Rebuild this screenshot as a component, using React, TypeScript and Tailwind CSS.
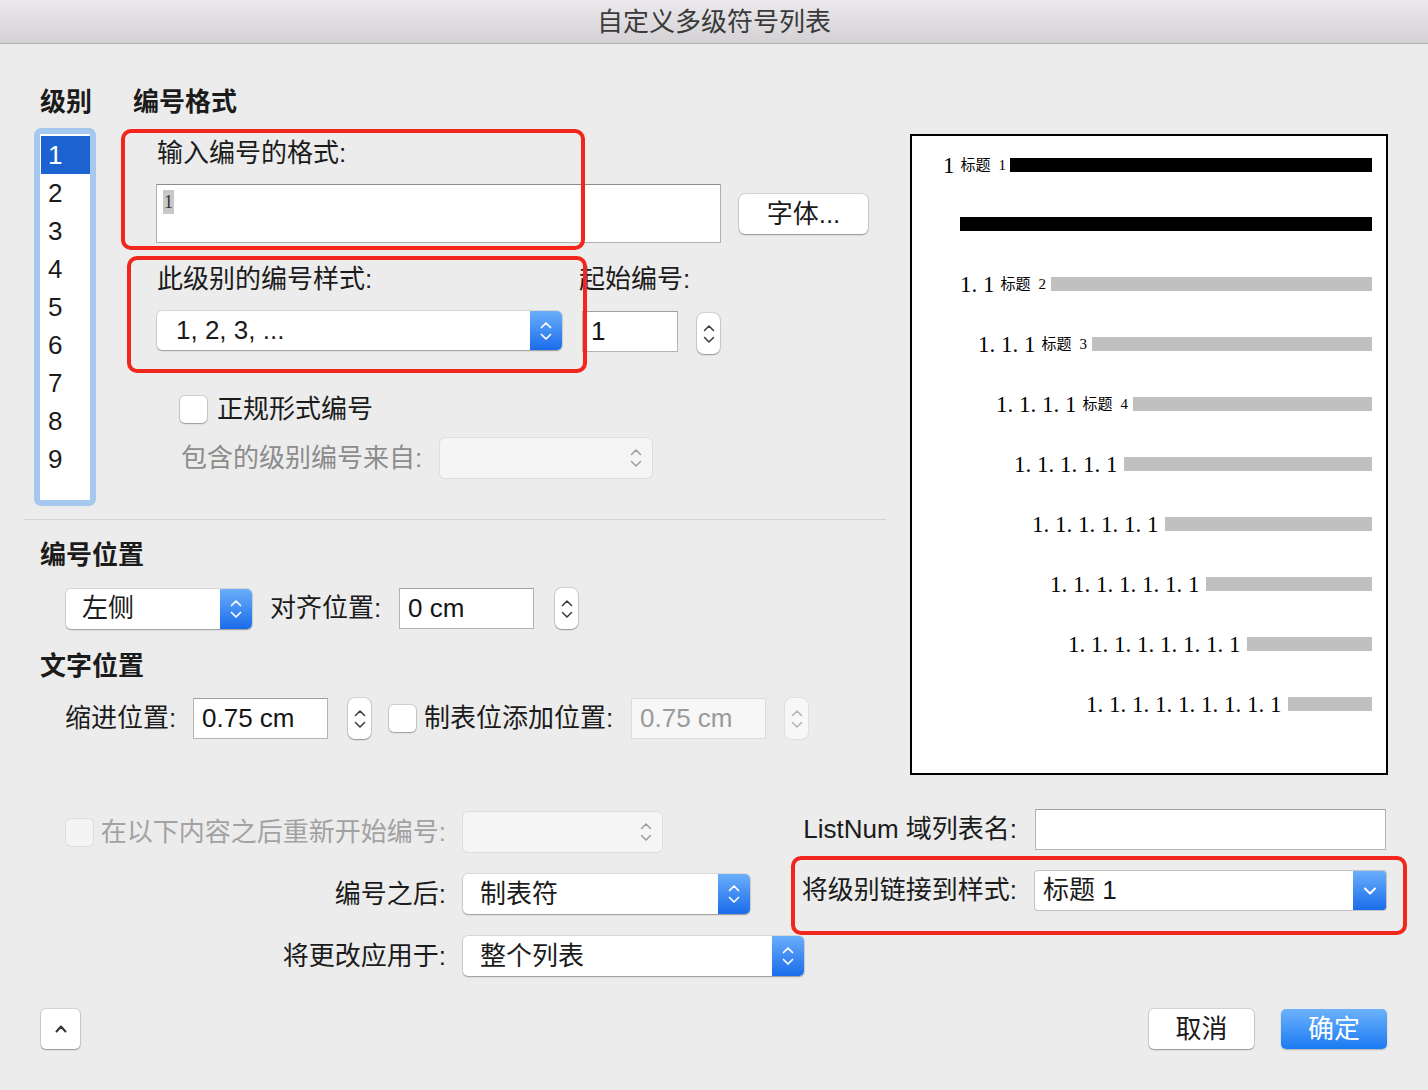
import React from "react";

function Chevs({ color, sw = 1.7 }: { color: string; sw?: number }) {
  return (
    <svg width="14" height="26" viewBox="0 0 14 26" fill="none">
      <path d="M2.5 9.5 L7 5 L11.5 9.5" stroke={color} strokeWidth={sw} strokeLinecap="round" strokeLinejoin="round" />
      <path d="M2.5 16.5 L7 21 L11.5 16.5" stroke={color} strokeWidth={sw} strokeLinecap="round" strokeLinejoin="round" />
    </svg>
  );
}

function DownChev() {
  return (
    <svg width="14" height="10" viewBox="0 0 14 10" fill="none">
      <path d="M2 2.5 L7 7.5 L12 2.5" stroke="white" strokeWidth="2" strokeLinecap="round" strokeLinejoin="round" />
    </svg>
  );
}

function Select({ cls, text, kind, pl = "pl-[18px]" }: { cls: string; text?: string; kind: "blue" | "down" | "disabled"; pl?: string }) {
  const base =
    kind === "disabled"
      ? "bg-[#f5f5f5] shadow-[0_0_0_1px_#dedede,0_1px_1px_rgba(0,0,0,0.06)]"
      : kind === "down"
      ? "bg-white shadow-[0_0_0_1px_#c4c4c4]"
      : "bg-white shadow-[0_0_0_1px_rgba(0,0,0,0.08),0_1px_1.5px_rgba(0,0,0,0.3)]";
  return (
    <div className={`shrink-0 flex ${kind === "down" ? "rounded-[3px]" : "rounded-[5px]"} ${base} ${cls}`}>
      <div className={`flex-1 flex items-center ${pl} text-[26px] text-[#1b1b1b]`}>{text}</div>
      {kind === "blue" && (
        <div className="w-[32px] rounded-r-[5px] bg-[linear-gradient(to_bottom,#6aaefb,#1a6cea)] flex items-center justify-center">
          <Chevs color="white" />
        </div>
      )}
      {kind === "down" && (
        <div className="w-[33px] rounded-r-[3px] bg-[linear-gradient(to_bottom,#6aaefb,#1a6cea)] flex items-center justify-center">
          <DownChev />
        </div>
      )}
      {kind === "disabled" && (
        <div className="w-[32px] flex items-center justify-center">
          <Chevs color="#9c9c9c" sw={1.5} />
        </div>
      )}
    </div>
  );
}

function Stepper({ disabled = false }: { disabled?: boolean }) {
  return (
    <div
      className={`shrink-0 w-[23px] h-[41px] rounded-[7px] flex items-center justify-center ${
        disabled ? "bg-[#f7f7f7] shadow-[0_0_0_1px_#e0e0e0]" : "bg-white shadow-[0_0_0_1px_rgba(0,0,0,0.1),0_1px_1.5px_rgba(0,0,0,0.3)]"
      }`}
    >
      <Chevs color={disabled ? "#b4b4b4" : "#3a3a3a"} sw={1.5} />
    </div>
  );
}

function Checkbox({ disabled = false }: { disabled?: boolean }) {
  return (
    <div
      className={`shrink-0 w-[27px] h-[27px] rounded-[5px] ${
        disabled ? "bg-[#f4f4f4] shadow-[0_0_0_1px_#dedede]" : "bg-white shadow-[0_0_0_1px_rgba(0,0,0,0.12),0_1px_1.5px_rgba(0,0,0,0.25)]"
      }`}
    />
  );
}

function TextInput({ cls, text, disabled = false }: { cls: string; text?: string; disabled?: boolean }) {
  return (
    <div
      className={`shrink-0 flex items-center pl-[8px] text-[26px] ${
        disabled ? "bg-[#f7f7f7] border border-[#dcdcdc] text-[#9a9a9a]" : "bg-white border border-[#b4b4b4] border-t-[#a0a0a0] text-[#151515]"
      } ${cls}`}
    >
      {text}
    </div>
  );
}

function Preview() {
  return (
    <div className="shrink-0 ml-[24px] mt-[90px] w-[478px] h-[641px] border-2 border-black bg-white font-['Liberation_Serif','Noto_Sans_CJK_SC',serif] text-black">
      <div className="flex items-center h-[58px] pl-[31px] pr-[14px]">
        <span className="text-[23px] leading-none">1</span>
        <span className="ml-[6px] text-[15px] leading-none">标题</span>
        <span className="ml-[8px] text-[15px] leading-none">1</span>
        <div className="ml-[4px] flex-1 h-[14px] bg-black" />
      </div>
      <div className="flex items-center h-[60px] pl-[48px] pr-[14px]">
        <div className="flex-1 h-[14px] bg-black" />
      </div>
      <div className="flex items-center h-[60px] pl-[48px] pr-[14px]">
        <span className="text-[23px] leading-none whitespace-pre">1. 1</span>
        <span className="ml-[6px] text-[15px] leading-none">标题</span>
        <span className="ml-[8px] text-[15px] leading-none">2</span>
        <div className="ml-[5px] flex-1 h-[14px] bg-[#c0c0c0]" />
      </div>
      <div className="flex items-center h-[60px] pl-[66px] pr-[14px]">
        <span className="text-[23px] leading-none whitespace-pre">1. 1. 1</span>
        <span className="ml-[6px] text-[15px] leading-none">标题</span>
        <span className="ml-[8px] text-[15px] leading-none">3</span>
        <div className="ml-[5px] flex-1 h-[14px] bg-[#c0c0c0]" />
      </div>
      <div className="flex items-center h-[60px] pl-[84px] pr-[14px]">
        <span className="text-[23px] leading-none whitespace-pre">1. 1. 1. 1</span>
        <span className="ml-[6px] text-[15px] leading-none">标题</span>
        <span className="ml-[8px] text-[15px] leading-none">4</span>
        <div className="ml-[5px] flex-1 h-[14px] bg-[#c0c0c0]" />
      </div>
      <div className="flex items-center h-[60px] pl-[102px] pr-[14px]">
        <span className="text-[23px] leading-none whitespace-pre">1. 1. 1. 1. 1</span>
        <div className="ml-[6px] flex-1 h-[14px] bg-[#c0c0c0]" />
      </div>
      <div className="flex items-center h-[60px] pl-[120px] pr-[14px]">
        <span className="text-[23px] leading-none whitespace-pre">1. 1. 1. 1. 1. 1</span>
        <div className="ml-[6px] flex-1 h-[14px] bg-[#c0c0c0]" />
      </div>
      <div className="flex items-center h-[60px] pl-[138px] pr-[14px]">
        <span className="text-[23px] leading-none whitespace-pre">1. 1. 1. 1. 1. 1. 1</span>
        <div className="ml-[6px] flex-1 h-[14px] bg-[#c0c0c0]" />
      </div>
      <div className="flex items-center h-[60px] pl-[156px] pr-[14px]">
        <span className="text-[23px] leading-none whitespace-pre">1. 1. 1. 1. 1. 1. 1. 1</span>
        <div className="ml-[6px] flex-1 h-[14px] bg-[#c0c0c0]" />
      </div>
      <div className="flex items-center h-[60px] pl-[174px] pr-[14px]">
        <span className="text-[23px] leading-none whitespace-pre">1. 1. 1. 1. 1. 1. 1. 1. 1</span>
        <div className="ml-[6px] flex-1 h-[14px] bg-[#c0c0c0]" />
      </div>
    </div>
  );
}

export default function App() {
  const levels = ["1", "2", "3", "4", "5", "6", "7", "8", "9"];
  return (
    <div className="relative w-[1428px] h-[1090px] overflow-hidden whitespace-nowrap bg-[#ececec] font-['Liberation_Sans','Noto_Sans_CJK_SC',sans-serif] text-[#1b1b1b]">
      {/* Title bar */}
      <div className="h-[44px] bg-[linear-gradient(to_bottom,#ebe9eb,#d3d1d3)] border-b border-[#b3b3b3] flex items-center justify-center">
        <span className="text-[26px] leading-none text-[#3a3a3a]">自定义多级符号列表</span>
      </div>

      <div className="flex pl-[24px]">
        {/* left column */}
        <div className="shrink-0 w-[862px]">
          <div className="flex pt-[43px]">
            {/* levels */}
            <div className="shrink-0 ml-[10px] w-[62px]">
              <div className="pl-[6px] h-[30px] leading-[30px] text-[26px] font-bold">级别</div>
              <div className="mt-[11px] h-[378px] rounded-[7px] border-[6px] border-[#a6c8ee] bg-white pt-[2px] pl-px">
                {levels.map((l, i) => (
                  <div
                    key={l}
                    className={`h-[38px] leading-[38px] pl-[7px] text-[26px] ${i === 0 ? "bg-[#1c63d1] text-white" : "text-[#1b1b1b]"}`}
                  >
                    {l}
                  </div>
                ))}
              </div>
            </div>
            {/* format */}
            <div className="ml-[37px] flex-1">
              <div className="h-[30px] leading-[30px] text-[26px] font-bold">编号格式</div>
              <div className="pl-[24px]">
                <div className="mt-[21px] h-[30px] leading-[30px] text-[26px]">输入编号的格式:</div>
                <div className="mt-[16px] flex">
                  <div className="shrink-0 -ml-px w-[565px] h-[59px] bg-white border border-[#b0b0b0] border-t-[#8e8e8e] pl-[6px] pt-[5px]">
                    <span className="inline-block bg-[#c8c8c8] font-['Liberation_Serif',serif] text-[18px] leading-[24px] text-[#333] px-px">1</span>
                  </div>
                  <div className="shrink-0 ml-[18px] mt-[10px] w-[129px] h-[40px] rounded-[6px] bg-white shadow-[0_0_0_1px_rgba(0,0,0,0.1),0_1px_1.5px_rgba(0,0,0,0.3)] flex items-center justify-center text-[26px]">
                    字体...
                  </div>
                </div>
                <div className="mt-[21px] flex h-[30px] leading-[30px] text-[26px]">
                  <div className="shrink-0 w-[425px]">此级别的编号样式:</div>
                  <div className="-ml-[3px]">起始编号:</div>
                </div>
                <div className="mt-[17px] flex items-start">
                  <Select cls="w-[405px] h-[39px]" text="1, 2, 3, ..." kind="blue" pl="pl-[19px]" />
                  <TextInput cls="ml-[20px] w-[96px] h-[41px]" text="1" />
                  <div className="ml-[19px] mt-[2px]">
                    <Stepper />
                  </div>
                </div>
                <div className="mt-[40px] flex items-center h-[30px] ml-[23px]">
                  <Checkbox />
                  <span className="ml-[10px] text-[26px]">正规形式编号</span>
                </div>
                <div className="mt-[14px] flex items-center h-[40px] ml-[24px]">
                  <span className="shrink-0 w-[259px] text-[26px] text-[#8c8c8c]">包含的级别编号来自:</span>
                  <Select cls="w-[212px] h-[40px]" kind="disabled" />
                </div>
              </div>
            </div>
          </div>

          <div className="mt-[13px] border-t border-[#d4d4d4]" />

          <div className="mt-[20px] pl-[16px] h-[30px] leading-[30px] text-[26px] font-bold">编号位置</div>
          <div className="mt-[18px] ml-[42px] flex items-center">
            <Select cls="w-[186px] h-[40px]" text="左侧" kind="blue" pl="pl-[16px]" />
            <span className="shrink-0 ml-[18px] w-[111px] text-[26px]">对齐位置:</span>
            <TextInput cls="ml-[18px] w-[135px] h-[41px]" text="0 cm" />
            <div className="ml-[21px]">
              <Stepper />
            </div>
          </div>

          <div className="mt-[22px] pl-[16px] h-[30px] leading-[30px] text-[26px] font-bold">文字位置</div>
          <div className="mt-[17px] ml-[41px] flex items-center">
            <span className="shrink-0 w-[111px] text-[26px]">缩进位置:</span>
            <TextInput cls="ml-[17px] w-[135px] h-[41px]" text="0.75 cm" />
            <div className="ml-[20px]">
              <Stepper />
            </div>
            <div className="ml-[18px]">
              <Checkbox />
            </div>
            <span className="shrink-0 ml-[8px] w-[189px] text-[26px]">制表位添加位置:</span>
            <TextInput cls="ml-[18px] w-[135px] h-[41px]" text="0.75 cm" disabled />
            <div className="ml-[19px]">
              <Stepper disabled />
            </div>
          </div>
        </div>

        <Preview />
      </div>

      {/* bottom section */}
      <div className="mt-[34px] flex pl-[24px]">
        <div className="shrink-0 w-[766px] pt-[3px] flex flex-col gap-[22px]">
          <div className="flex items-center h-[40px]">
            <div className="shrink-0 w-[422px] flex items-center justify-end">
              <Checkbox disabled />
              <span className="ml-[8px] text-[26px] text-[#a2a2a2]">在以下内容之后重新开始编号:</span>
            </div>
            <Select cls="ml-[17px] w-[199px] h-[40px]" kind="disabled" />
          </div>
          <div className="flex items-center h-[40px]">
            <div className="shrink-0 w-[422px] text-right text-[26px]">编号之后:</div>
            <Select cls="ml-[17px] w-[287px] h-[40px]" text="制表符" kind="blue" pl="pl-[17px]" />
          </div>
          <div className="flex items-center h-[40px]">
            <div className="shrink-0 w-[422px] text-right text-[26px]">将更改应用于:</div>
            <Select cls="ml-[17px] w-[341px] h-[40px]" text="整个列表" kind="blue" pl="pl-[17px]" />
          </div>
        </div>
        <div className="flex flex-col gap-[21px]">
          <div className="flex items-center h-[41px]">
            <div className="shrink-0 w-[227px] text-right text-[26px]">ListNum 域列表名:</div>
            <TextInput cls="ml-[18px] w-[351px] h-[41px]" />
          </div>
          <div className="flex items-center h-[39px]">
            <div className="shrink-0 w-[227px] text-right text-[26px]">将级别链接到样式:</div>
            <Select cls="ml-[18px] w-[351px] h-[39px]" text="标题 1" kind="down" pl="pl-[8px]" />
          </div>
        </div>
      </div>

      {/* footer */}
      <div className="mt-[33px] flex items-center px-[41px]">
        <div className="shrink-0 w-[39px] h-[40px] rounded-[5px] bg-white shadow-[0_0_0_1px_rgba(0,0,0,0.1),0_1px_1.5px_rgba(0,0,0,0.3)] flex items-center justify-center">
          <svg width="14" height="10" viewBox="0 0 14 10" fill="none">
            <path d="M2.5 7.5 L7 2.5 L11.5 7.5" stroke="#333" strokeWidth="2" strokeLinecap="round" strokeLinejoin="round" />
          </svg>
        </div>
        <div className="flex-1" />
        <div className="shrink-0 w-[105px] h-[40px] rounded-[5px] bg-white shadow-[0_0_0_1px_rgba(0,0,0,0.1),0_1px_1.5px_rgba(0,0,0,0.3)] flex items-center justify-center text-[26px]">
          取消
        </div>
        <div className="shrink-0 ml-[27px] w-[106px] h-[40px] rounded-[5px] bg-[linear-gradient(to_bottom,#6cb2fc,#1b7af2)] shadow-[0_1px_1.5px_rgba(0,0,0,0.25)] flex items-center justify-center text-[26px] text-white">
          确定
        </div>
      </div>

      {/* red annotation boxes */}
      <div className="absolute left-[121px] top-[129px] w-[464px] h-[121px] rounded-[10px] border-4 border-[#f2261c] pointer-events-none" />
      <div className="absolute left-[127px] top-[256px] w-[460px] h-[117px] rounded-[10px] border-4 border-[#f2261c] pointer-events-none" />
      <div className="absolute left-[791px] top-[856px] w-[616px] h-[79px] rounded-[10px] border-4 border-[#f2261c] pointer-events-none" />
    </div>
  );
}
